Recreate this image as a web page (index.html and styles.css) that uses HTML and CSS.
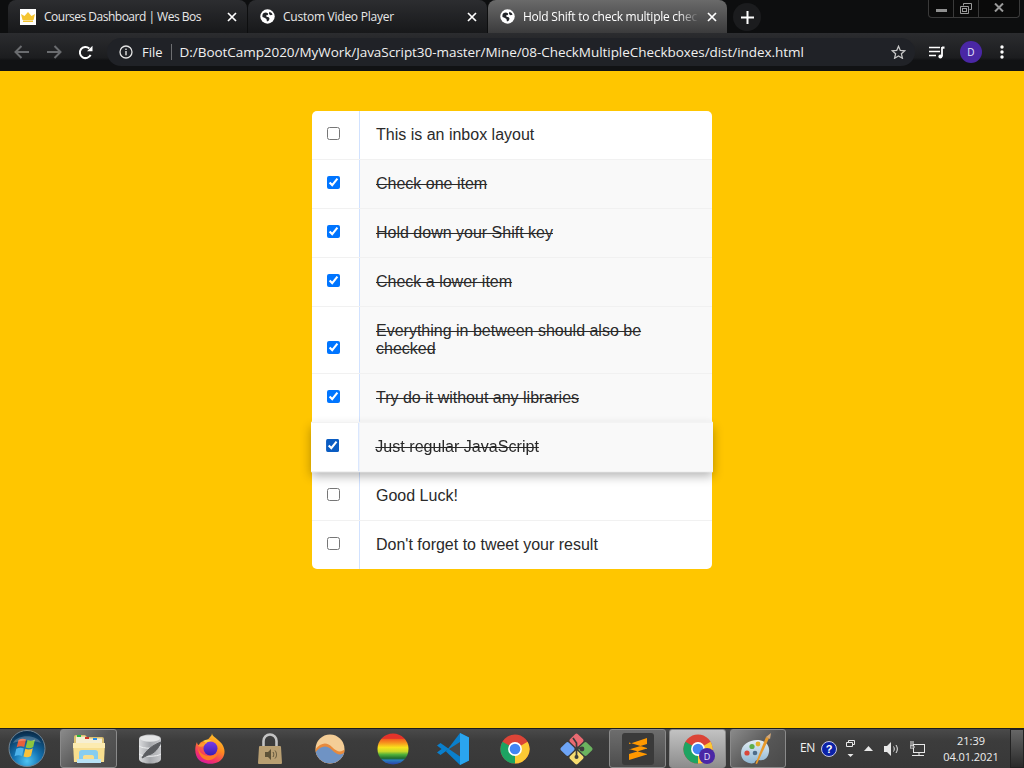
FILE: index.html
```html
<!DOCTYPE html>
<html lang="en">
<head>
<meta charset="utf-8">
<title>Hold Shift to check multiple checkboxes</title>
<link rel="stylesheet" href="styles.css">
</head>
<body>
<svg class="defs" width="0" height="0" aria-hidden="true">
  <symbol id="globe" viewBox="0 0 16 16">
    <circle cx="8" cy="8" r="7.700" fill="#fff"/>
    <path d="M2.600 6.200C3.400 4.400 5 3.600 7 3.900l1.800.9-.5 1.500-1.800.5.500 1.500 2.300.4.900 1.600-1 2.300-1.800.6-.5-2.500L4.800 9.400 2.600 8.400zM10 2.800l2.400 1.400 1 2-2.200.4-1.700-1.400z" fill="#23252a"/>
  </symbol>
  <symbol id="close" viewBox="0 0 10 10">
    <path d="M1 1l8 8M9 1l-8 8" stroke="#fff" stroke-width="1.700" fill="none"/>
  </symbol>
  <symbol id="chrome" viewBox="0 0 32 32">
    <circle cx="16" cy="16" r="15.500" fill="#db4437"/>
    <path d="M16 16 29.400 8.200A15.500 15.500 0 0 1 16 31.500z" fill="#fcc934"/>
    <path d="M16 16 16 31.500A15.500 15.500 0 0 1 2.600 8.200z" fill="#1da462"/>
    <circle cx="16" cy="16" r="7.400" fill="#fff"/>
    <circle cx="16" cy="16" r="5.700" fill="#4285f4"/>
  </symbol>
</svg>

<div class="screen">
  <header class="browser">
    <div class="tabstrip">
      <div class="tab">
        <span class="favicon-wes">
          <svg width="14" height="10" viewBox="0 0 14 10"><path d="M0 2l3.500 2L7 0l3.500 4L14 2l-1.500 6h-11z" fill="#f4c430"/><rect x="2" y="8.500" width="10" height="1.500" fill="#f4c430"/></svg>
        </span>
        <span class="tab-title tab-tight">Courses Dashboard | Wes Bos</span>
        <svg class="tab-close" width="10" height="10"><use href="#close"/></svg>
      </div>
      <div class="tab">
        <svg class="tab-globe" width="15" height="15"><use href="#globe"/></svg>
        <span class="tab-title">Custom Video Player</span>
        <svg class="tab-close" width="10" height="10"><use href="#close"/></svg>
      </div>
      <div class="tab tab-active">
        <svg class="tab-globe" width="15" height="15"><use href="#globe"/></svg>
        <span class="tab-title tab-fade">Hold Shift to check multiple chec</span>
        <svg class="tab-close" width="10" height="10"><use href="#close"/></svg>
      </div>
      <div class="newtab">
        <svg width="13" height="13" viewBox="0 0 13 13"><path d="M6.500 0v13M0 6.500h13" stroke="#fff" stroke-width="2"/></svg>
      </div>
      <div class="winctl">
        <span class="winbtn win-min"><svg width="11" height="4"><rect width="11" height="3" y="1" fill="#8f8f8f"/></svg></span>
        <span class="winbtn win-max"><svg width="12" height="11" viewBox="0 0 12 11"><path d="M3.500 2.500V.5h8v6h-2M.5 3.500h8v7h-8z" stroke="#9a9a9a" fill="none"/><rect x="2.500" y="5.500" width="4" height="3" stroke="#9a9a9a" fill="none"/></svg></span>
        <span class="winbtn win-x"><svg width="10" height="9" viewBox="0 0 10 9"><path d="M1 .5l8 8M9 .5l-8 8" stroke="#9a9a9a" stroke-width="2"/></svg></span>
      </div>
    </div>
    <div class="toolbar">
      <svg class="nav-icon" width="16" height="14" viewBox="0 0 16 14"><path d="M15 7H2M7.500 1 1.500 7l6 6" stroke="#6a6c6f" stroke-width="2" fill="none"/></svg>
      <svg class="nav-icon" width="16" height="14" viewBox="0 0 16 14"><path d="M1 7h13M8.500 1l6 6-6 6" stroke="#6a6c6f" stroke-width="2" fill="none"/></svg>
      <svg class="nav-icon" width="15" height="15" viewBox="0 0 15 15"><path d="M12.600 9.800A5.600 5.600 0 1 1 11.300 3.400" stroke="#fff" stroke-width="2" fill="none"/><path d="M9 6.300h5.500V.8z" fill="#fff"/></svg>
      <div class="omnibox">
        <svg class="omni-info" width="14" height="14" viewBox="0 0 14 14"><circle cx="7" cy="7" r="6" stroke="#e3e3e3" stroke-width="1.300" fill="none"/><rect x="6.300" y="6" width="1.400" height="4.300" fill="#e3e3e3"/><rect x="6.300" y="3.600" width="1.400" height="1.400" fill="#e3e3e3"/></svg>
        <span class="omni-file">File</span>
        <span class="omni-sep"></span>
        <span class="omni-url">D:/BootCamp2020/MyWork/JavaScript30-master/Mine/08-CheckMultipleCheckboxes/dist/index.html</span>
        <svg class="omni-star" width="15" height="14" viewBox="0 0 15 14"><path d="M7.500 1.300 9.300 5.400l4.500.4-3.400 3 1 4.400-3.900-2.300-3.900 2.300 1-4.400-3.400-3 4.500-.4z" stroke="#c8c8c8" stroke-width="1.300" fill="none"/></svg>
      </div>
      <svg class="tool-media" width="16" height="13" viewBox="0 0 16 13"><path d="M0 1.500h11M0 5.500h11M0 9.500h7" stroke="#fff" stroke-width="1.500"/><path d="M13 1v9.500" stroke="#fff" stroke-width="1.800"/><path d="M13 .5h2.500v2.200H13z" fill="#fff"/><circle cx="11.400" cy="10.400" r="2" fill="#fff"/></svg>
      <span class="avatar">D</span>
      <svg class="tool-menu" width="4" height="14" viewBox="0 0 4 14"><circle cx="2" cy="2" r="1.700" fill="#fff"/><circle cx="2" cy="7" r="1.700" fill="#fff"/><circle cx="2" cy="12" r="1.700" fill="#fff"/></svg>
    </div>
  </header>

  <main class="page">
    <div class="inbox">
      <div class="item"><input type="checkbox"><p>This is an inbox layout</p></div>
      <div class="item"><input type="checkbox" checked><p>Check one item</p></div>
      <div class="item"><input type="checkbox" checked><p>Hold down your Shift key</p></div>
      <div class="item"><input type="checkbox" checked><p>Check a lower item</p></div>
      <div class="item"><input type="checkbox" checked><p>Everything in between should also be checked</p></div>
      <div class="item"><input type="checkbox" checked><p>Try do it without any libraries</p></div>
      <div class="item item-hover"><input type="checkbox" checked><p>Just regular JavaScript</p></div>
      <div class="item"><input type="checkbox"><p>Good Luck!</p></div>
      <div class="item"><input type="checkbox"><p>Don't forget to tweet your result</p></div>
    </div>
  </main>

  <footer class="taskbar">
    <div class="start">
      <svg width="38" height="37" viewBox="0 0 38 37">
        <defs>
          <radialGradient id="orb" cx=".5" cy=".85" r=".8"><stop offset="0" stop-color="#4fc4f2"/><stop offset=".45" stop-color="#1475b5"/><stop offset="1" stop-color="#0a2d4c"/></radialGradient>
        </defs>
        <circle cx="19" cy="18.500" r="18" fill="url(#orb)" stroke="#6f8494"/>
        <path d="M10.500 10c2.500-1.500 5-1.500 7.500-.5l-1.800 7.500c-2.500-1-5-1-7.500.3z" fill="#e8603c"/>
        <path d="M19.500 10c2.500 1 5 1 7.500-.5l-1.800 7.500c-2.500 1.500-5 1.500-7.500.5z" fill="#8cc63f"/>
        <path d="M8.300 18.800c2.500-1.200 5-1.300 7.500-.4L14 26c-2.500-1-5-1-7.500.3z" fill="#4db2ea"/>
        <path d="M17.300 18.800c2.500 1 5 1 7.500-.5L23 26c-2.500 1.500-5 1.500-7.500.5z" fill="#f8c13a"/>
        <path d="M5 13C9 4 29 4 33 13c-8-3.500-20-3.500-28 0z" fill="#fff" opacity=".22"/>
      </svg>
    </div>
    <div class="tb-btn tb-btn-explorer">
      <svg width="32" height="29" viewBox="0 0 32 29">
        <path d="M1 3q0-2 2-2h9l2 2h15q2 0 2 2v6H1z" fill="#dcc070"/>
        <path d="M3 2.500h9l2 2h15V9H3z" fill="#f6efd2"/>
        <rect x="4" y="1" width="4" height="2" fill="#27b53c"/><rect x="12" y="3" width="4" height="2" fill="#cf3328"/><rect x="20" y="4" width="4" height="2" fill="#2b8de4"/>
        <path d="M0 9h32l-1 19H1z" fill="#f7de8e"/>
        <path d="M0 9h32v5H0z" fill="#fcebb0"/>
        <path d="M6 27v-8c0-2 1-3 3-3h13c2 0 3 1 3 3v8h-4v-4c0-1-.5-2-2-2h-7c-1.500 0-2 1-2 2v4z" fill="#86cdf0"/>
        <rect x="4" y="25" width="24" height="4" fill="#b7e2f6"/>
      </svg>
    </div>
    <div class="tb-icon">
      <svg width="24" height="30" viewBox="0 0 24 30">
        <defs><linearGradient id="dbg" x1="0" y1="0" x2="1" y2="0"><stop offset="0" stop-color="#d9dadc"/><stop offset=".5" stop-color="#a5a7ab"/><stop offset="1" stop-color="#c6c7ca"/></linearGradient></defs>
        <path d="M1 5c0-6 22-6 22 0v20c0 6-22 6-22 0z" fill="url(#dbg)"/>
        <ellipse cx="12" cy="4.500" rx="10" ry="3.200" fill="#e4e5e6"/>
        <path d="M1 12c4 3 18 3 22 0M1 20c4 3 18 3 22 0" stroke="#eeeff0" fill="none"/>
        <path d="M4 24C8 16 15 11 23 8c-2 6-7 12-13 13zM4 24l5-5" fill="#5a5c60" stroke="#5a5c60"/>
      </svg>
    </div>
    <div class="tb-icon">
      <svg width="30" height="31" viewBox="0 0 30 31">
        <defs>
          <linearGradient id="ffx" x1=".8" y1="0" x2=".3" y2="1"><stop offset="0" stop-color="#ffd02e"/><stop offset=".45" stop-color="#ff8a1f"/><stop offset=".8" stop-color="#f2306a"/><stop offset="1" stop-color="#d61aa0"/></linearGradient>
          <linearGradient id="ffp" x1="0" y1="0" x2="0" y2="1"><stop offset="0" stop-color="#7a3be8"/><stop offset="1" stop-color="#3a1fb0"/></linearGradient>
        </defs>
        <path d="M17 0c0 3 3 4 6 7 3 2.500 4 4 4 4 4 6 3 12-1 16-5 5-16 5-22 0C0 23-1 15 2 9c0 2 1 3 2 3 1-3 3-4 6-4 2-1 4-2 5-4 1-1 2-2 2-4z" fill="url(#ffx)"/>
        <circle cx="15.500" cy="15.500" r="7" fill="url(#ffp)"/>
        <path d="M3 14c1 7 9 11 16 8 3-1 5-4 4-7 1 6-2 11-8 12-6 1-12-4-12-13z" fill="#ff7a24"/>
        <path d="M3 13c2-3 5-4 9-3-2 1-3 2-3 3-2 1-4 1-6 0z" fill="#ff9a2e"/>
        <path d="M8 8c3-2 6-2 9 0-3 0-5 1-6 2z" fill="#ffc93a"/>
      </svg>
    </div>
    <div class="tb-icon">
      <svg width="24" height="32" viewBox="0 0 24 32">
        <path d="M5.500 14V8a6.500 6.500 0 0 1 13 0v6" stroke="#c4c4c4" stroke-width="2.600" fill="none"/>
        <path d="M2 13h20q1 0 1 1l1 16q0 1-1 1H1q-1 0-1-1l1-16q0-1 1-1z" fill="#b99f72"/>
        <path d="M7 19h3l3-3v11l-3-3H7z" fill="#5d5238"/>
        <path d="M15 19c1 1.500 1 3.500 0 5M17 17.500c2 2.500 2 6 0 8" stroke="#5d5238" fill="none"/>
      </svg>
    </div>
    <div class="tb-icon">
      <svg width="30" height="30" viewBox="0 0 30 30">
        <defs>
          <clipPath id="sun"><circle cx="15" cy="15" r="14.500"/></clipPath>
        </defs>
        <g clip-path="url(#sun)">
          <rect width="30" height="30" fill="#f4cd96"/>
          <path d="M0 16C6 8 12 8 17 13s9 6 13 2v15H0z" fill="#e88a3c"/>
          <path d="M0 19c6-8 12-8 17-3s9 6 13 2v12H0z" fill="#6f93c4"/>
        </g>
      </svg>
    </div>
    <div class="tb-icon tb-wide">
      <svg class="shift-right" width="32" height="32" viewBox="0 0 32 32">
        <defs>
          <linearGradient id="rbw" x1="0" y1="0" x2="0" y2="1">
            <stop offset=".16" stop-color="#e5332a"/><stop offset=".17" stop-color="#f25a1e"/><stop offset=".3" stop-color="#f7931e"/><stop offset=".45" stop-color="#f9e21c"/><stop offset=".58" stop-color="#c6d82a"/><stop offset=".68" stop-color="#4faf3a"/><stop offset=".8" stop-color="#1f6b2e"/><stop offset=".86" stop-color="#2a7fc0"/><stop offset="1" stop-color="#2b3fa8"/>
          </linearGradient>
        </defs>
        <circle cx="16" cy="16" r="15.500" fill="url(#rbw)"/>
      </svg>
    </div>
    <div class="tb-icon tb-wide">
      <svg width="32" height="32" viewBox="0 0 32 32">
        <path d="M23 0 32 4.500V27.500L23 32 9 18.500z" fill="#0a7fcc"/>
        <path d="M23 0 32 4.500V27.500L23 32z" fill="#2aa5ef"/>
        <path d="M23 9 12 16 23 23.500z" fill="#46474a"/>
        <path d="M3.500 10 0 12.500 4.500 16 0 19.500 3.500 22 12 16z" fill="#0a7fcc"/>
      </svg>
    </div>
    <div class="tb-icon tb-wide">
      <svg width="30" height="30"><use href="#chrome"/></svg>
    </div>
    <div class="tb-icon tb-narrow">
      <svg width="33" height="32" viewBox="0 0 33 32">
        <rect x="11" y="2" width="11" height="11" rx="2" transform="rotate(45 16.500 7.500)" fill="#ea6a72"/>
        <rect x="2" y="10.500" width="11" height="11" rx="2" transform="rotate(45 7.500 16)" fill="#6ea5f7"/>
        <rect x="20" y="10.500" width="11" height="11" rx="2" transform="rotate(45 25.500 16)" fill="#6bb35f"/>
        <rect x="11" y="19" width="11" height="11" rx="2" transform="rotate(45 16.500 24.500)" fill="#f7dc6f"/>
        <path d="M13 5l3.500 5V25M16.500 14l5 2" stroke="#3c3c3c" stroke-width="1.700" fill="none"/>
        <circle cx="16.500" cy="24" r="2" fill="#3c3c3c"/><circle cx="22" cy="16" r="2.400" fill="#3c3c3c"/>
      </svg>
    </div>
    <div class="tb-btn tb-btn-sublime">
      <span class="sublime-tile">
        <svg width="20" height="24" viewBox="0 0 20 24"><path d="M19 1v6L1 12.500V7zM1 12l18 5v-6L1 5.500zM19 11.500v6L1 23v-6z" fill="#ff9800"/></svg>
      </span>
    </div>
    <div class="tb-btn tb-btn-chrome">
      <svg width="30" height="30"><use href="#chrome"/></svg>
      <span class="chrome-badge">D</span>
    </div>
    <div class="tb-btn tb-btn-paint">
      <svg width="36" height="32" viewBox="0 0 36 32">
        <defs><linearGradient id="pal" x1="0" y1="0" x2="0" y2="1"><stop offset="0" stop-color="#e3eef5"/><stop offset="1" stop-color="#8fb6d2"/></linearGradient></defs>
        <path d="M1 20C1 12 9 7 17 7s13 5 12 12-6 9-10 8c-3-.5-4 1-4 2s-3 2-6 1C5 29 1 26 1 20z" fill="url(#pal)"/>
        <circle cx="7" cy="20" r="2.600" fill="#d9463a"/><circle cx="12" cy="13.500" r="2.600" fill="#5dae4a"/><circle cx="18" cy="11" r="2.400" fill="#e2b32c"/><circle cx="15" cy="20" r="2.300" fill="#4d6c8a"/>
        <path d="M29 5 17 31l-1.500-.5L26 4z" fill="#e89a2c"/>
        <path d="M31 0l-1 6-4-2z" fill="#d4a97a"/>
      </svg>
    </div>
    <div class="tray">
      <span class="tray-lang">EN</span>
      <svg class="tray-help" width="16" height="16" viewBox="0 0 16 16"><circle cx="8" cy="8" r="7.500" fill="#0b22a8" stroke="#c8c8e0"/><text x="8" y="12" class="help-q" text-anchor="middle">?</text></svg>
      <svg class="tray-net" width="9" height="18" viewBox="0 0 9 18"><path d="M2.500 2.500V.5h6v4h-2M.5 2.500h6v4h-6z" stroke="#e8e8e8" fill="none"/><path d="M1.500 14h6l-3 3z" fill="#e8e8e8"/></svg>
      <svg class="tray-up" width="9" height="5" viewBox="0 0 9 5"><path d="M0 5l4.500-5L9 5z" fill="#e8e8e8"/></svg>
      <svg class="tray-vol" width="16" height="14" viewBox="0 0 16 14"><path d="M0 4h3l4-4v14l-4-4H0z" fill="#e8e8e8"/><path d="M9.500 4.500c1 1.500 1 3.500 0 5M12 3c1.800 2.500 1.800 5.500 0 8" stroke="#e8e8e8" fill="none"/></svg>
      <svg class="tray-pc" width="15" height="15" viewBox="0 0 15 15"><rect x="3.500" y="3.500" width="11" height="8" stroke="#e8e8e8" fill="none"/><path d="M2 14.500h12M9 11v3M1 0v5M3 0v5M0 5h4v2H0z" stroke="#e8e8e8"/></svg>
      <div class="clock"><span>21:39</span><span>04.01.2021</span></div>
      <div class="show-desktop"></div>
    </div>
  </footer>
</div>
</body>
</html>
```
FILE: styles.css
```css
* { box-sizing: border-box; }
html, body { margin: 0; height: 100%; overflow: hidden; }
.defs { display: block; height: 0; }
.screen { width: 1024px; height: 768px; display: flex; flex-direction: column; font-family: "Open Sans", "Liberation Sans", sans-serif; }

.browser { height: 71px; flex: none; background: #0d0e0f; display: flex; flex-direction: column; }
.tabstrip { height: 33px; display: flex; align-items: stretch; padding-left: 8px; }
.tab { width: 239px; display: flex; align-items: center; padding: 0 10px 0 12px; border-radius: 8px 8px 0 0; background: linear-gradient(#2c2d30, #17181a); color: #e8e8e8; font-size: 12px; margin-right: 1px; }
.tab-active { background: linear-gradient(#6a6a6a, #3b3b3c); color: #fff; margin-right: 0; }
.tab-title { flex: 1; white-space: nowrap; overflow: hidden; margin-left: 8px; letter-spacing: -.25px; }
.tab-tight { letter-spacing: -.5px; }
.tab-fade { -webkit-mask-image: linear-gradient(90deg, #000 88%, transparent); mask-image: linear-gradient(90deg, #000 88%, transparent); }
.tab-close { flex: none; margin-left: 8px; }
.tab-globe { flex: none; }
.favicon-wes { width: 16px; height: 16px; background: #fff; display: flex; align-items: center; justify-content: center; flex: none; }
.newtab { width: 28px; height: 28px; margin: 3px 0 0 6px; border-radius: 50%; background: #1b1c1e; display: flex; align-items: center; justify-content: center; }
.winctl { margin: 0 4px 0 auto; width: 92px; height: 18px; display: flex; border: 1px solid #3a3a3a; border-top: 0; border-radius: 0 0 4px 4px; background: #0a0a0a; }
.winbtn { display: flex; align-items: center; justify-content: center; border-right: 1px solid #3a3a3a; }
.win-min { width: 25px; padding-top: 3px; }
.win-max { width: 25px; }
.win-x { flex: 1; border-right: 0; padding-bottom: 2px; }

.toolbar { height: 38px; display: flex; align-items: center; padding: 0 0 0 14px; background: linear-gradient(#2b2c2f, #1c1d1f 65%, #111214 72%); }
.nav-icon { margin-right: 16px; flex: none; }
.nav-icon:nth-child(3) { margin-right: 14px; }
.omnibox { width: 808px; height: 28px; border-radius: 14px; background: #202227; display: flex; align-items: center; padding: 0 11px; color: #f0f0f0; font-size: 13px; flex: none; }
.omni-info { flex: none; margin-left: 1px; }
.omni-file { margin-left: 9px; }
.omni-sep { width: 1px; height: 16px; background: #6d6e71; margin: 0 8px; }
.omni-url { flex: 1; white-space: nowrap; font-size: 13.5px; letter-spacing: -.05px; }
.omni-star { flex: none; margin-right: -2px; }
.tool-media { margin-left: 14px; flex: none; }
.avatar { width: 22px; height: 22px; border-radius: 50%; background: #4a27a5; color: #e8e8ff; font-size: 10px; display: flex; align-items: center; justify-content: center; margin-left: 15px; flex: none; }
.tool-menu { margin-left: 18px; flex: none; }

.page { flex: 1; min-height: 0; background: #ffc600; padding-top: 40px; }
.inbox { width: 400px; margin: 0 auto; background: #fff; border-radius: 5px; font-family: "Liberation Sans", Arial, sans-serif; }
.item { display: flex; align-items: flex-end; border-bottom: 1px solid #f1f1f1; }
.item:last-child { border-bottom: 0; }
.item input { flex: none; width: 13px; height: 13px; margin: 0 19px 19px 15px; }
.item p { flex: 1; margin: 0; padding: 15px 16px; font-size: 16px; line-height: 18px; color: #2a2a2a; border-left: 1px solid #d1e2ff; }
.item input:checked + p { background: #f9f9f9; text-decoration: line-through; }
.item-hover { position: relative; background: #fff; transform: scale(1.005); box-shadow: 0 5px 10px rgba(0, 0, 0, .3); border-top: 1px solid #f1f1f1; margin-top: -1px; }
.item-hover input { accent-color: #0a5cc2; }

.taskbar { height: 40px; flex: none; display: flex; align-items: stretch; background: linear-gradient(#4a4a4a, #3c3c3c 30%, #383838); border-top: 1px solid #1d1d1d; color: #f2f2f2; }
.start { width: 60px; display: flex; align-items: center; padding-left: 8px; flex: none; }
.tb-icon { width: 60px; display: flex; align-items: center; justify-content: center; flex: none; }
.tb-wide { width: 62px; }
.tb-narrow { width: 60px; }
.shift-right { margin-left: 3px; }
.tb-btn { height: 39px; display: flex; align-items: center; justify-content: center; border: 1px solid #8a8a8a; border-radius: 3px; background: linear-gradient(135deg, #8a8a8a, #565656 55%, #4a4a4a); flex: none; position: relative; }
.tb-btn-explorer { width: 57px; margin-right: 3px; }
.tb-btn-sublime { width: 57px; margin-left: 3px; background: linear-gradient(#6d6d6d, #4d4d4d); }
.tb-btn-chrome { width: 57px; margin-left: 3px; background: linear-gradient(#c2c2c2, #8d8d8d); }
.tb-btn-paint { width: 56px; margin-left: 4px; }
.sublime-tile { width: 32px; height: 32px; background: #3a3a3a; border-radius: 3px; display: flex; align-items: center; justify-content: center; }
.chrome-badge { position: absolute; left: 29px; top: 18px; width: 16px; height: 16px; border-radius: 50%; background: #4a27a5; color: #e8e8ff; font-size: 9px; display: flex; align-items: center; justify-content: center; }
.tray { flex: 1; display: flex; align-items: center; padding-left: 14px; font-size: 12px; }
.tray-lang { width: 21px; letter-spacing: -.3px; padding-bottom: 2px; flex: none; }
.tray svg { flex: none; }
.tray-net { margin-left: 9px; }
.tray-up { margin-left: 9px; }
.tray-vol { margin-left: 11px; }
.tray-pc { margin-left: 10px; }
.help-q { font: bold 11px "Liberation Sans", sans-serif; fill: #fff; }
.clock { display: flex; flex-direction: column; align-items: center; font-size: 11px; line-height: 16px; margin-left: 15px; width: 62px; letter-spacing: -.05px; color: #eee; flex: none; }
.show-desktop { width: 14px; height: 39px; margin-left: 8px; background: linear-gradient(#666, #2a2a2a); border: 1px solid #222; flex: none; }
```
